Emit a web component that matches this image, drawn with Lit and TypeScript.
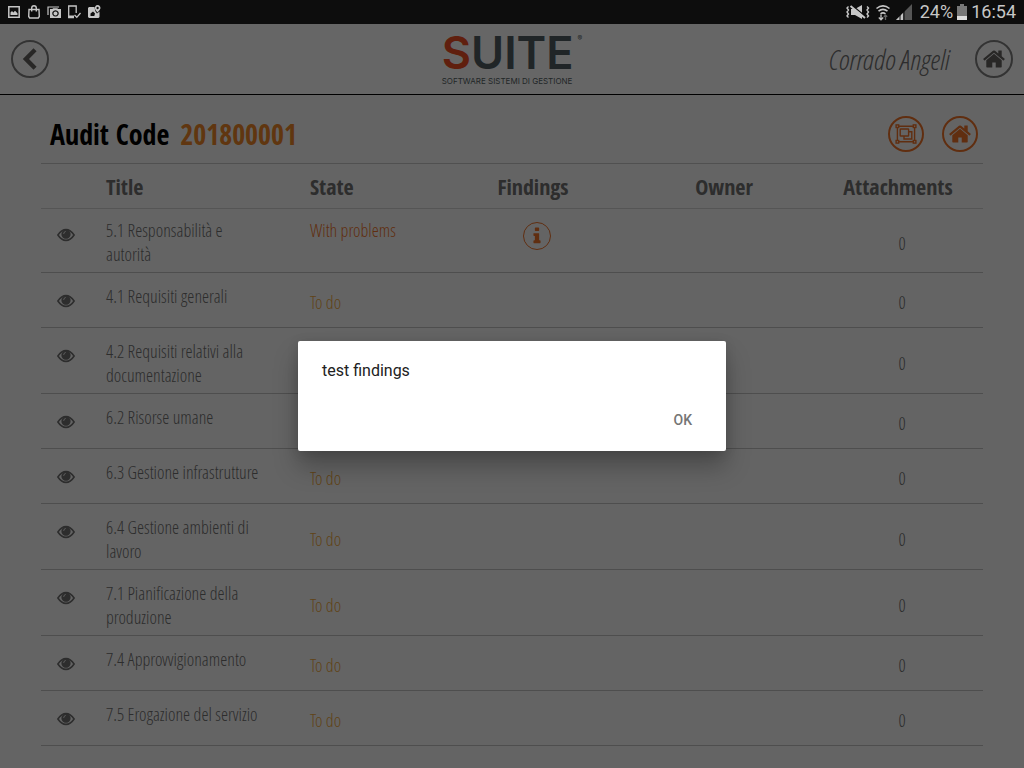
import { LitElement, html, svg, css, nothing } from "lit";
import { customElement, state } from "lit/decorators.js";

interface AuditRow {
  title: string;
  state: "With problems" | "To do";
  findings?: boolean;
  attachments: number;
}

const rows: AuditRow[] = [
  { title: "5.1 Responsabilità e autorità", state: "With problems", findings: true, attachments: 0 },
  { title: "4.1 Requisiti generali", state: "To do", attachments: 0 },
  { title: "4.2 Requisiti relativi alla documentazione", state: "To do", attachments: 0 },
  { title: "6.2 Risorse umane", state: "To do", attachments: 0 },
  { title: "6.3 Gestione infrastrutture", state: "To do", attachments: 0 },
  { title: "6.4 Gestione ambienti di lavoro", state: "To do", attachments: 0 },
  { title: "7.1 Pianificazione della produzione", state: "To do", attachments: 0 },
  { title: "7.4 Approvvigionamento", state: "To do", attachments: 0 },
  { title: "7.5 Erogazione del servizio", state: "To do", attachments: 0 },
];

const icon = (size: number, box: string, body: unknown) =>
  html`<svg width=${size} height=${size} viewBox=${box} fill="currentColor" aria-hidden="true">${body}</svg>`;

const homeIcon = (size: number) =>
  icon(size, "0 0 1792 1792", svg`<path d="M1472 992v480q0 26-19 45t-45 19h-384v-384h-256v384h-384q-26 0-45-19t-19-45v-480q0-1 .5-3t.5-3l575-474 575 474q1 2 1 6zm223-69l-62 74q-8 9-21 11h-3q-13 0-21-7l-692-577-692 577q-12 8-24 7-13-2-21-11l-62-74q-8-10-7-23.5t11-21.5l719-599q32-26 76-26t76 26l244 204v-195q0-14 9-23t23-9h192q14 0 23 9t9 23v408l219 182q10 8 11 21.5t-7 23.5z"/>`);

const eyeIcon = icon(18, "0 0 18 18", svg`<path fill="none" stroke="currentColor" stroke-width="1.6" d="M.9 9Q4.500 3.600 9 3.600T17.100 9Q13.500 14.400 9 14.400T.9 9z"/><path fill-rule="evenodd" d="M9 3.600a4.600 4.600 0 1 0 .01 0zM8.800 5Q6.300 5.400 6.300 8H7.100Q7.200 6.200 8.800 5.800z"/>`);

const infoIcon = icon(20, "0 0 1792 1792", svg`<path d="M1216 1344v128q0 26-19 45t-45 19h-512q-26 0-45-19t-19-45v-128q0-26 19-45t45-19h64v-384h-64q-26 0-45-19t-19-45v-128q0-26 19-45t45-19h384q26 0 45 19t19 45v576h64q26 0 45 19t19 45zm-128-1152v192q0 26-19 45t-45 19h-256q-26 0-45-19t-19-45v-192q0-26 19-45t45-19h256q26 0 45 19t19 45z"/>`);

const chevronIcon = icon(24, "0 0 24 24", svg`<path d="M15.5 1.2 18.6 4.3 11 12l7.6 7.7-3.1 3.1L4.8 12z"/>`);

const groupIcon = icon(22, "0 0 22 22", svg`<g fill="none" stroke="currentColor" stroke-width="1.4">
  <path d="M4 3.2H18M4 18.8H18M2.4 5v12M19.6 5v12"/>
  <rect x="1.1" y="1.9" width="2.6" height="2.6"/><rect x="18.3" y="1.9" width="2.6" height="2.6"/>
  <rect x="1.1" y="17.5" width="2.6" height="2.6"/><rect x="18.3" y="17.5" width="2.6" height="2.6"/>
  <rect x="5.2" y="6" width="8.4" height="7" rx=".5"/><path d="M13.6 8.8h3.2v7.2H9V13"/></g>`);

@customElement("status-bar")
export class StatusBar extends LitElement {
  static styles = css`
    :host {
      display: flex;
      justify-content: space-between;
      align-items: center;
      height: 24px;
      padding: 0 8px 0 7px;
      background: #0d0d0d;
      color: #c6c6c6;
      font: 18px/24px Roboto, sans-serif;
    }
    .side { display: flex; align-items: center; gap: 6px; }
    .right { gap: 4px; }
    .battery { margin-left: 4px; }
    svg { display: block; }
  `;

  render() {
    return html`
      <div class="side">
        ${icon(14, "0 0 14 14", svg`<path fill="none" stroke="currentColor" stroke-width="1.5" d="M1.8 1.8h10.4v10.4H1.8z"/><path d="M3.5 10V7.5L5 6l1.3 1.5L8 5.8l2.5 2.4V10z"/>`)}
        ${icon(14, "0 0 14 14", svg`<path fill="none" stroke="currentColor" stroke-width="1.4" d="M2 4.5h10l.3 7-1 1.5H2.7l-1-1.5zM4.7 6.5V3Q4.7.8 7 .8T9.3 3v3.5"/>`)}
        ${icon(14, "0 0 14 14", svg`<path fill="none" stroke="currentColor" stroke-width="1.2" d="M1 10V2h11"/><path fill-rule="evenodd" d="M3 4h2.5L6 3.2h4.5l.5.8h3v9H3zM8.5 5.2a3.2 3.2 0 1 0 .01 0zM8.5 6.4a2 2 0 1 1-.01 0z"/>`)}
        ${icon(14, "0 0 14 14", svg`<path fill="none" stroke="currentColor" stroke-width="1.3" d="M9.2 8V1H1.7v11.5H7M7.5 10l2.3 2.3L13.5 8"/><path d="M1.5 10.5H7V13H1.5z"/>`)}
        ${icon(14, "0 0 14 14", svg`<path fill-rule="evenodd" d="M2 2h5.5Q7.6 6 10 8.500L12.500 6.500V12l-1 1H2l-1-1V3zM3.500 11h3.800L8 8.500 6 6.500 3.500 8.500z"/><path fill-rule="evenodd" d="M10.500 0Q13.500.3 13.500 3.200 13.200 5 10.500 7.600 8 5 7.800 3.200 8 .3 10.500 0zM10.600 1.800a1.200 1.200 0 1 0 .01 0z"/>`)}
      </div>
      <div class="side right">
        <svg width="24" height="16" viewBox="0 0 24 16" fill="currentColor" aria-hidden="true">
          <path d="M5 5h4l7-4v14l-7-4H5z"/><path d="M5 .5 20 13" stroke="#0d0d0d" stroke-width="1.500"/>
          <path d="M4.500 2 19 14" stroke="currentColor" stroke-width="2"/>
          <path fill="none" stroke="currentColor" stroke-width="1.400" d="M2.500 2.500 1 4l1.500 2L1 8l1.500 2L1 12l1.500 1.500M21 2.500 22.500 4 21 6l1.500 2L21 10l1.500 2-1.500 1.500"/>
        </svg>
        <svg width="18" height="17" viewBox="3 0 18 17" aria-hidden="true" fill="none" stroke="currentColor" stroke-width="1.600">
          <path d="M5.500 4.500Q12-.8 18.500 4.500M7.500 7.200Q12 3.600 16.500 7.200M9.500 9.800Q12 8 14.500 9.800"/>
          <path d="M10 10.500V16M7.800 13.500l2.200 2.300 2.200-2.300" stroke-width="1.300"/>
          <path d="M14.500 16v-5M12.800 12.800l1.700-1.700 1.700 1.700" stroke="#666" stroke-width="1.300"/>
        </svg>
        <svg width="16" height="16" viewBox="0 0 16 16" aria-hidden="true">
          <path d="M0 16 16 0v16z" fill="#555"/><path d="M0 16l7-7v7z" fill="currentColor"/><path d="M4 16V10M8 16V6" stroke="#0d0d0d"/>
        </svg>
        <span class="battery">24%</span>
        <svg width="10" height="16" viewBox="0 0 10 16" aria-hidden="true">
          <path d="M0 2h3V0h4v2h3v14H0z" fill="#777"/><path d="M0 12h10v4H0z" fill="#ddd"/>
        </svg>
        <span>16:54</span>
      </div>`;
  }
}

@customElement("app-root")
export class AppRoot extends LitElement {
  @state() private message = "test findings";

  static styles = css`
    :host {
      display: flex;
      flex-direction: column;
      min-height: 100vh;
      color: #707070;
      font: 300 18px/24px "Open Sans Condensed Light", "Open Sans Condensed", "Liberation Sans Narrow", sans-serif;
    }
    * { box-sizing: border-box; }
    svg { display: block; }
    button { font: inherit; background: none; border: 0; padding: 0; color: inherit; cursor: pointer; }
    .screen { position: relative; flex: 1; background: #fafafa; }
    .top {
      display: grid;
      grid-template-columns: 1fr auto 1fr;
      align-items: center;
      height: 71px;
      padding: 0 11px;
      background: #fff;
      border-bottom: 1px solid #000;
    }
    .round {
      display: grid;
      place-items: center;
      width: 38px;
      height: 38px;
      border: 2px solid #808080;
      border-radius: 50%;
      color: #646260;
    }
    .logo { display: grid; justify-items: start; }
    .word { display: flex; font: 600 45px/44px Inter, sans-serif; color: #515c62; }
    .word .s { color: #f04e23; }
    .word sup { font: 7px/16px Inter, sans-serif; margin-left: 4px; }
    .tag { font: 8px/12px Inter, sans-serif; color: #555f64; }
    .user { display: flex; justify-content: flex-end; align-items: center; gap: 26px; }
    .name { font-size: 28px; line-height: 36px; font-style: italic; }
    .panel { padding: 0 41px; }
    .heading { display: flex; align-items: center; gap: 18px; height: 68px; padding: 10px 5px 0 9px; }
    .heading h1 { flex: 1; margin: 0; font: 700 28px/36px "Open Sans Condensed", sans-serif; color: #000; }
    .code { color: #f08828; margin-left: 4px; }
    .orange { color: #f0742a; border-color: currentColor; }
    .action { width: 36px; height: 36px; }
    .info { width: 28px; height: 28px; border-width: 1px; margin: 0 auto; }
    table { width: 100%; border-spacing: 0; table-layout: fixed; border-top: 1px solid #c8c8c8; }
    th {
      height: 45px;
      padding: 0 8px 0 0;
      border-bottom: 1px solid #d4d4d4;
      font: 700 22px/32px "Open Sans Condensed", sans-serif;
      text-align: center;
    }
    td { height: 55px; padding: 4px 0 0; border-bottom: 1px solid #c4c4c4; text-align: center; }
    th.left, td.left { text-align: left; }
    .eye { width: 65px; }
    .title { width: 204px; }
    .state { width: 137px; }
    .findings { width: 180px; }
    .owner { width: 194px; }
    th.owner { padding-right: 0; }
    td.eye { vertical-align: top; padding-top: 19px; }
    td.eye button { margin-left: 16px; display: block; }
    td.title { vertical-align: top; padding: 11px 44px 6px 0; }
    tr.problem td.title { padding-top: 9px; }
    tr.problem td.state { vertical-align: top; padding-top: 9px; color: #f0742a; }
    tr.problem td.eye { padding-top: 17px; }
    tr.problem td.findings { vertical-align: top; padding-top: 13px; }
    td.state { color: #f0a83c; }
    .backdrop {
      position: absolute;
      inset: 0;
      display: grid;
      place-items: center;
      background: rgba(0, 0, 0, 0.6);
    }
    .dialog {
      position: static;
      display: flex;
      flex-direction: column;
      justify-content: space-between;
      width: 428px;
      max-width: 90%;
      min-height: 110px;
      margin: 0;
      padding: 18px 24px 13px;
      border: 0;
      border-radius: 2px;
      background: #fff;
      color: #212121;
      font: 16px/24px Roboto, sans-serif;
      box-shadow: 0 16px 24px rgba(0, 0, 0, 0.26), 0 2px 12px rgba(0, 0, 0, 0.12);
    }
    .dialog p { margin: 0; }
    .ok { align-self: flex-end; padding: 6px 10px; font: 500 14px/24px Roboto, sans-serif; color: #757575; }
  `;

  private row(r: AuditRow) {
    return html`<tr class=${r.findings ? "problem" : ""}>
      <td class="eye"><button aria-label="View ${r.title}">${eyeIcon}</button></td>
      <td class="title left">${r.title}</td>
      <td class="state left">${r.state}</td>
      <td class="findings">${r.findings
        ? html`<button class="round orange info" aria-label="Findings" @click=${() => (this.message = "test findings")}>${infoIcon}</button>`
        : nothing}</td>
      <td class="owner"></td>
      <td>${r.attachments}</td>
    </tr>`;
  }

  render() {
    return html`
      <status-bar></status-bar>
      <div class="screen">
        <header class="top">
          <button class="round" aria-label="Back">${chevronIcon}</button>
          <div class="logo">
            <div class="word"><span class="s">S</span><span>UITE</span><sup>®</sup></div>
            <div class="tag">SOFTWARE SISTEMI DI GESTIONE</div>
          </div>
          <div class="user">
            <span class="name">Corrado Angeli</span>
            <button class="round" aria-label="Home">${homeIcon(24)}</button>
          </div>
        </header>
        <main class="panel">
          <div class="heading">
            <h1>Audit Code <span class="code">201800001</span></h1>
            <button class="round orange action" aria-label="Group">${groupIcon}</button>
            <button class="round orange action" aria-label="Audit home">${homeIcon(24)}</button>
          </div>
          <table>
            <thead>
              <tr>
                <th class="eye"></th>
                <th class="title left">Title</th>
                <th class="state left">State</th>
                <th class="findings">Findings</th>
                <th class="owner">Owner</th>
                <th>Attachments</th>
              </tr>
            </thead>
            <tbody>${rows.map((r) => this.row(r))}</tbody>
          </table>
        </main>
        ${this.message
          ? html`<div class="backdrop">
              <dialog class="dialog" open aria-label="Findings">
                <p>${this.message}</p>
                <button class="ok" @click=${() => (this.message = "")}>OK</button>
              </dialog>
            </div>`
          : nothing}
      </div>`;
  }
}
